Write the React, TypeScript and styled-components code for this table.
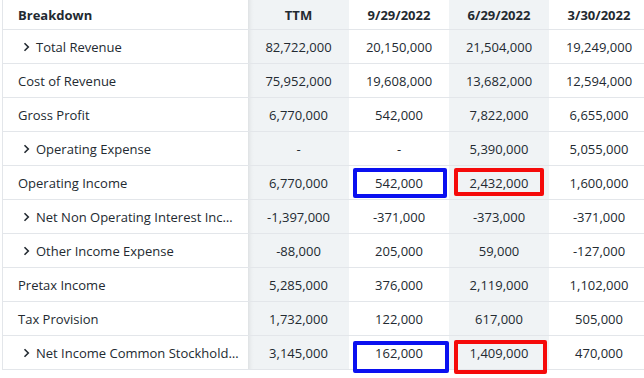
import React from "react";
import styled, { createGlobalStyle } from "styled-components";

const Global = createGlobalStyle`
  html { overflow: hidden; background: #ffffff; }
  body { margin: 0; padding: 0; min-height: 100vh; background: #ffffff; font-family: "Open Sans", "Liberation Sans", sans-serif; color: #232a31; }
`;

const Table = styled.div`
  margin-left: 2px;
  border-left: 1px solid #e3e6ea;
  width: 646px;
`;

const Row = styled.div<{ $header?: boolean }>`
  display: grid;
  grid-template-columns: 245px 101px 100px 100px 100px;
  height: ${(p) => (p.$header ? 29 : 33)}px;
  border-bottom: 1px solid #e3e6ea;
  font-size: 13px;
  font-weight: ${(p) => (p.$header ? 700 : 400)};
`;

const Label = styled.div<{ $indent?: boolean }>`
  display: flex;
  align-items: center;
  gap: 6px;
  padding-left: ${(p) => (p.$indent ? 20 : 15)}px;
  white-space: nowrap;
  overflow: hidden;
  background: #ffffff;
`;

const Cell = styled.div<{ $shade?: boolean; $edge?: boolean }>`
  position: relative;
  display: flex;
  align-items: center;
  justify-content: center;
  white-space: nowrap;
  background-color: ${(p) => (p.$shade ? "#f0f3f5" : "#ffffff")};
  background-image: ${(p) =>
    p.$edge
      ? "linear-gradient(to right, rgba(0,0,0,0.07), rgba(0,0,0,0.02) 3px, rgba(0,0,0,0) 6px)"
      : "none"};
`;

const Mark = styled.div<{ $color: string; $t: number; $l: number; $r: number; $b: number }>`
  position: absolute;
  top: ${(p) => p.$t}px;
  left: ${(p) => p.$l}px;
  right: ${(p) => p.$r}px;
  bottom: ${(p) => p.$b}px;
  border: 4px solid ${(p) => p.$color};
  border-radius: 2px;
  pointer-events: none;
  z-index: 1;
`;

const Chevron = () => (
  <svg width="7" height="10" viewBox="0 0 7 10" aria-hidden="true">
    <path d="M1.5 1.2 L5.3 5 L1.5 8.8" fill="none" stroke="#232a31" strokeWidth="1.6" />
  </svg>
);

type MarkSpec = { color: string; t: number; l: number; r: number; b: number };
type RowData = {
  label: string;
  expand?: boolean;
  values: string[];
  marks?: (MarkSpec | null)[];
};

const BLUE = "#0a10f0";
const RED = "#f50a0a";

const rows: RowData[] = [
  { label: "Total Revenue", expand: true, values: ["82,722,000", "20,150,000", "21,504,000", "19,249,000"] },
  { label: "Cost of Revenue", values: ["75,952,000", "19,608,000", "13,682,000", "12,594,000"] },
  { label: "Gross Profit", values: ["6,770,000", "542,000", "7,822,000", "6,655,000"] },
  { label: "Operating Expense", expand: true, values: ["-", "-", "5,390,000", "5,055,000"] },
  {
    label: "Operating Income",
    values: ["6,770,000", "542,000", "2,432,000", "1,600,000"],
    marks: [
      null,
      { color: BLUE, t: 2, l: 4, r: 2, b: 1 },
      { color: RED, t: 2, l: 5, r: 5, b: 3 },
      null,
    ],
  },
  { label: "Net Non Operating Interest Inc\u2026", expand: true, values: ["-1,397,000", "-371,000", "-373,000", "-371,000"] },
  { label: "Other Income Expense", expand: true, values: ["-88,000", "205,000", "59,000", "-127,000"] },
  { label: "Pretax Income", values: ["5,285,000", "376,000", "2,119,000", "1,102,000"] },
  { label: "Tax Provision", values: ["1,732,000", "122,000", "617,000", "505,000"] },
  {
    label: "Net Income Common Stockhold\u2026",
    expand: true,
    values: ["3,145,000", "162,000", "1,409,000", "470,000"],
    marks: [
      null,
      { color: BLUE, t: 5, l: 4, r: 0, b: -4 },
      { color: RED, t: 4, l: 5, r: 2, b: -5 },
      null,
    ],
  },
];

const headers = ["TTM", "9/29/2022", "6/29/2022", "3/30/2022"];

export default function App() {
  return (
    <>
      <Global />
      <Table>
        <Row $header>
          <Label>Breakdown</Label>
          {headers.map((h, i) => (
            <Cell key={h} $shade={i % 2 === 0} $edge={i === 0}>
              {h}
            </Cell>
          ))}
        </Row>
        {rows.map((r) => (
          <Row key={r.label}>
            <Label $indent={r.expand}>
              {r.expand && <Chevron />}
              {r.label}
            </Label>
            {r.values.map((v, i) => {
              const m = r.marks?.[i];
              return (
                <Cell key={i} $shade={i % 2 === 0} $edge={i === 0}>
                  {v}
                  {m && <Mark $color={m.color} $t={m.t} $l={m.l} $r={m.r} $b={m.b} />}
                </Cell>
              );
            })}
          </Row>
        ))}
      </Table>
    </>
  );
}
